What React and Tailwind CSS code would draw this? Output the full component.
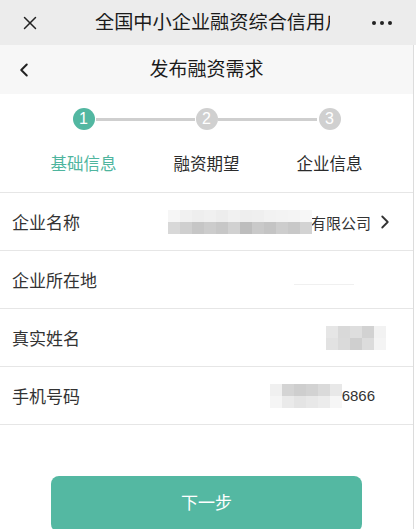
import React from "react";
import { X, ChevronLeft, ChevronRight } from "lucide-react";

const font = { fontFamily: '"Liberation Sans", "Noto Sans CJK SC", sans-serif' };

const steps = [
  { n: 1, label: "基础信息", active: true },
  { n: 2, label: "融资期望" },
  { n: 3, label: "企业信息" },
];

function Mosaic({ rows, cell = 12, h = 12 }) {
  return (
    <div className="flex flex-col blur-[0.6px]">
      {rows.map((row, i) => (
        <div key={i} className="flex">
          {row.map((c, j) => (
            <div key={j} style={{ width: cell, height: h, background: c }} />
          ))}
        </div>
      ))}
    </div>
  );
}

function Row({ label, children }) {
  return (
    <div className="flex items-center h-[58px] border-b border-[#e6e6e6] pl-[12px] pr-[17px]">
      <span className="text-[17px] text-[#333] leading-none pt-[4px]">{label}</span>
      <div className="flex-1 flex items-center justify-end">{children}</div>
    </div>
  );
}

export default function App() {
  return (
    <div className="w-[416px] h-[529px] overflow-hidden bg-white" style={font}>
      <header className="h-[45px] bg-[#ececec] flex items-center relative">
        <X className="ml-[19px] text-[#222]" size={22} strokeWidth={1.6} />
        <div className="ml-[54px] w-[235px] overflow-hidden whitespace-nowrap text-[19.2px] leading-none text-[#1b1b1b]">
          全国中小企业融资综合信用户
        </div>
        <div className="ml-auto mr-[24px] flex gap-[4px]">
          <span className="w-[4px] h-[4px] rounded-full bg-[#222]" />
          <span className="w-[4px] h-[4px] rounded-full bg-[#222]" />
          <span className="w-[4px] h-[4px] rounded-full bg-[#222]" />
        </div>
      </header>

      <div className="w-[414px] border-r border-[#dcdcdc]">
        <div className="h-[49px] bg-[#f7f7f7] flex items-center relative">
          <ChevronLeft className="ml-[13px] text-[#222]" size={22} strokeWidth={2.2} />
          <div className="absolute inset-x-0 text-center text-[19px] leading-none text-[#1b1b1b] pointer-events-none">
            发布融资需求
          </div>
        </div>

        <div className="h-[99px] border-b border-[#e6e6e6] px-[22px]">
          <div className="relative grid grid-cols-3 pt-[14px]">
            <div className="absolute left-[74px] right-[196px] top-[24px] h-[3px] bg-[#cfcfcf]" />
            <div className="absolute left-[196px] right-[74px] top-[24px] h-[3px] bg-[#cfcfcf]" />
            {steps.map((s) => (
              <div key={s.n} className="flex flex-col items-center">
                <div
                  className={`relative w-[22px] h-[22px] rounded-full flex items-center justify-center text-white text-[16px] leading-none ${
                    s.active ? "bg-[#52b7a1]" : "bg-[#d0d0d0]"
                  }`}
                >
                  {s.n}
                </div>
                <div
                  className={`mt-[26px] text-[16.5px] leading-none ${
                    s.active ? "text-[#4fb59e]" : "text-[#2b2b2b]"
                  }`}
                >
                  {s.label}
                </div>
              </div>
            ))}
          </div>
        </div>

        <Row label="企业名称">
          <Mosaic
            cell={12}
            h={12}
            rows={[
              ["#f6f6f6", "#f1f1f1", "#eeeeee", "#f0f0f0", "#ededed", "#f1f1f1", "#eeeeee", "#efefef", "#f2f2f2", "#f3f3f3", "#f4f4f4", "#f7f7f7"],
              ["#d8d8d8", "#cfcfcf", "#c6c6c6", "#cccccc", "#c7c7c7", "#d1d1d1", "#bdbdbd", "#c9c9c9", "#c4c4c4", "#cdcdcd", "#c8c8c8", "#d3d3d3"],
            ]}
          />
          <span className="text-[15px] text-[#333] leading-none pt-[3px] -ml-[1px]">有限公司</span>
          <ChevronRight className="ml-[3px] text-[#333]" size={22} strokeWidth={2} />
        </Row>
        <Row label="企业所在地">
          <div className="mr-[42px] mt-[10px] w-[60px] h-[1px] bg-[#f0f0f0]" />
        </Row>
        <Row label="真实姓名">
          <div className="mr-[10px]">
            <Mosaic
              cell={12}
              h={12}
              rows={[
                ["#e6e6e6", "#d9d9d9", "#dedede", "#d2d2d2", "#f2f2f2"],
                ["#e2e2e2", "#dadada", "#cfcfcf", "#dcdcdc", "#f4f4f4"],
              ]}
            />
          </div>
        </Row>
        <Row label="手机号码">
          <Mosaic
            cell={12}
            h={12}
            rows={[
              ["#f0f0f0", "#d4d4d4", "#cecece", "#d2d2d2", "#dadada", "#e8e8e8"],
              ["#f5f5f5", "#eaeaea", "#e4e4e4", "#e8e8e8", "#ececec", "#f6f6f6"],
            ]}
          />
          <span className="text-[15px] text-[#333] leading-none mr-[21px]">6866</span>
        </Row>

        <div className="pt-[51px] px-[51px]">
          <button className="w-[311px] h-[56px] rounded-[8px] bg-[#54b8a2] text-white text-[17px] leading-none flex items-center justify-center pb-[2px]">
            下一步
          </button>
        </div>
      </div>
    </div>
  );
}
